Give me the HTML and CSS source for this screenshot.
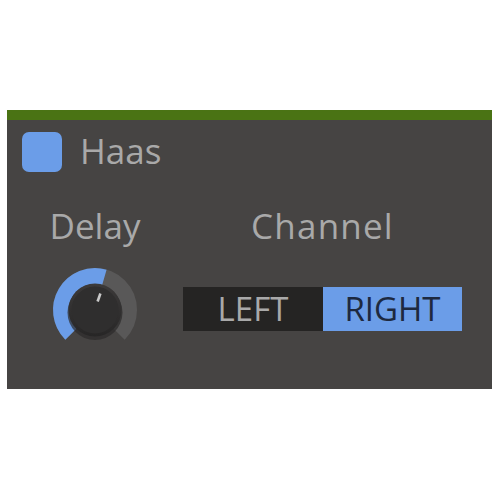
FILE: index.html
```html
<!DOCTYPE html>
<html>
<head>
<meta charset="utf-8">
<link rel="stylesheet" href="styles.css">
</head>
<body>
<div class="page">
  <div class="panel">
    <div class="header">
      <div class="checkbox"></div>
      <div class="title">Haas</div>
    </div>
    <div class="controls">
      <div class="col col-delay">
        <div class="label">Delay</div>
        <svg class="knob" width="100" height="100" viewBox="0 0 100 100">
          <defs>
            <linearGradient id="kg" x1="0" y1="0" x2="0" y2="1">
              <stop offset="0" stop-color="#3c3a3a"/>
              <stop offset="1" stop-color="#272626"/>
            </linearGradient>
          </defs>
          <path d="M25.96 74.04 A34 34 0 1 1 74.04 74.04" fill="none" stroke="#595858" stroke-width="16"/>
          <path d="M25.96 74.04 A34 34 0 0 1 59.37 17.32" fill="none" stroke="#6b9de8" stroke-width="16"/>
          <circle cx="50" cy="52.5" r="27.5" fill="#2b2a2a" opacity="0.7"/>
          <circle cx="50" cy="50" r="26.5" fill="url(#kg)"/>
          <circle cx="50" cy="50" r="23.5" fill="#2f2e2e"/>
          <line x1="52.6" y1="41.5" x2="55.4" y2="33.5" stroke="#c9c9c9" stroke-width="2.6"/>
        </svg>
      </div>
      <div class="col col-channel">
        <div class="label label-wide">Channel</div>
        <div class="segmented">
          <div class="seg seg-off">LEFT</div>
          <div class="seg seg-on">RIGHT</div>
        </div>
      </div>
    </div>
  </div>
</div>
</body>
</html>
```
FILE: styles.css
```css
html, body {
  margin: 0;
  padding: 0;
  background: #ffffff;
}
.page {
  padding: 110px 0 0 7px;
}
.panel {
  width: 485px;
  height: 269px;
  border-top: 10px solid #4a7314;
  background: #464443;
  font-family: "Open Sans", "Liberation Sans", sans-serif;
  color: #a9a9a9;
}
.header {
  display: flex;
  align-items: flex-start;
  padding: 12px 0 0 15px;
}
.checkbox {
  width: 40px;
  height: 40px;
  border-radius: 7px;
  background: #6b9de8;
}
.title {
  margin: 1px 0 0 18px;
  font-size: 35px;
  line-height: 35px;
}
.controls {
  display: flex;
  margin-top: 36px;
}
.col {
  display: flex;
  flex-direction: column;
  align-items: center;
}
.col-delay {
  width: 176px;
}
.col-channel {
  width: 279px;
}
.label {
  font-size: 35px;
  line-height: 35px;
  white-space: nowrap;
}
.label-wide {
  letter-spacing: 1.2px;
}
.knob {
  display: block;
  margin-top: 17px;
}
.segmented {
  display: flex;
  margin-top: 44px;
}
.seg {
  height: 44px;
  line-height: 44px;
  font-size: 33px;
  text-align: center;
}
.seg-off {
  width: 140px;
  background: #252423;
  color: #a9a9a9;
}
.seg-on {
  width: 139px;
  background: #6b9de8;
  color: #1d2940;
}
```
